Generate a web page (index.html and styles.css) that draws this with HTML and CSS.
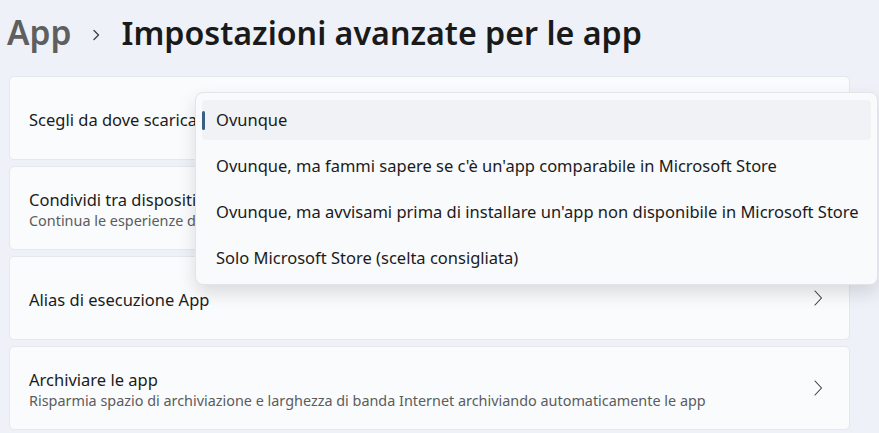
FILE: index.html
```html
<!DOCTYPE html>
<html lang="it">
<head>
<meta charset="utf-8">
<link rel="stylesheet" href="styles.css">
</head>
<body>
<header class="crumbs">
  <span class="crumb-parent">App</span>
  <svg class="crumb-sep" width="10" height="14" viewBox="0 0 10 14"><path d="M3 2.5 L7.5 7 L3 11.5" fill="none" stroke="#444" stroke-width="1.4" stroke-linecap="round" stroke-linejoin="round"/></svg>
  <span class="crumb-current">Impostazioni avanzate per le app</span>
</header>
<main class="cards">
  <div class="card">
    <div class="card-text"><div class="card-title">Scegli da dove scaricare le app</div></div>
  </div>
  <div class="card">
    <div class="card-text"><div class="card-title">Condividi tra dispositivi</div><div class="card-sub">Continua le esperienze dell'app su altri dispositivi</div></div>
  </div>
  <div class="card">
    <div class="card-text"><div class="card-title">Alias di esecuzione App</div></div>
    <svg class="chev" width="10" height="16" viewBox="0 0 10 16"><path d="M2 1 L8.5 8 L2 15" fill="none" stroke="#3a3a3a" stroke-width="1.1" stroke-linecap="round" stroke-linejoin="round"/></svg>
  </div>
  <div class="card">
    <div class="card-text"><div class="card-title">Archiviare le app</div><div class="card-sub">Risparmia spazio di archiviazione e larghezza di banda Internet archiviando automaticamente le app</div></div>
    <svg class="chev" width="10" height="16" viewBox="0 0 10 16"><path d="M2 1 L8.5 8 L2 15" fill="none" stroke="#3a3a3a" stroke-width="1.1" stroke-linecap="round" stroke-linejoin="round"/></svg>
  </div>
</main>
<div class="menu">
  <div class="item selected"><span class="accent"></span>Ovunque</div>
  <div class="item">Ovunque, ma fammi sapere se c'è un'app comparabile in Microsoft Store</div>
  <div class="item">Ovunque, ma avvisami prima di installare un'app non disponibile in Microsoft Store</div>
  <div class="item">Solo Microsoft Store (scelta consigliata)</div>
</div>
</body>
</html>
```
FILE: styles.css
```css
html, body { margin: 0; padding: 0; }
body {
  width: 879px; height: 433px; overflow: hidden;
  background: #eef2f8;
  font-family: "Noto Sans", "Open Sans", sans-serif;
  color: #1b1b1b;
  position: relative;
}
.crumbs {
  display: flex; align-items: baseline;
  height: 76px; box-sizing: border-box;
  padding: 10px 0 0 7px;
  font-weight: 600; font-size: 32.2px; line-height: 44px;
}
.crumb-parent { color: #5f5f5f; font-size: 33.5px; }
.crumb-sep { margin: 0 20px 0 20px; align-self: center; position: relative; top: -8px; }
.crumb-current { color: #1a1a1a; }
.cards {
  display: flex; flex-direction: column; gap: 6px;
  margin: 0 29px 0 9px;
}
.card {
  height: 84px; box-sizing: border-box;
  background: #f9fbfd;
  border: 1px solid #e4e7eb;
  border-radius: 5px;
  display: flex; align-items: center; justify-content: space-between;
  padding: 3px 26px 0 19px;
}
.chev { position: relative; top: -2px; }
.card-title { font-size: 16.5px; line-height: 22px; }
.card-sub { font-size: 14.4px; line-height: 20px; color: #5c5c5c; }
.menu {
  position: absolute; left: 195px; top: 92px;
  width: 683px; height: 193px; box-sizing: border-box;
  background: #f9fafc;
  border: 1px solid #e2e4e8;
  border-radius: 8px;
  box-shadow: 0 8px 18px rgba(0,0,0,0.13);
  padding: 7px 6px;
  display: flex; flex-direction: column; gap: 6px;
}
.item {
  height: 40px; border-radius: 4px;
  display: flex; align-items: center;
  padding-left: 14px;
  font-size: 16.5px;
  position: relative;
}
.item.selected { background: #f0f2f5; }
.accent {
  position: absolute; left: 0; top: 11px;
  width: 3px; height: 19px; border-radius: 2px;
  background: #3b5e84;
}
```
